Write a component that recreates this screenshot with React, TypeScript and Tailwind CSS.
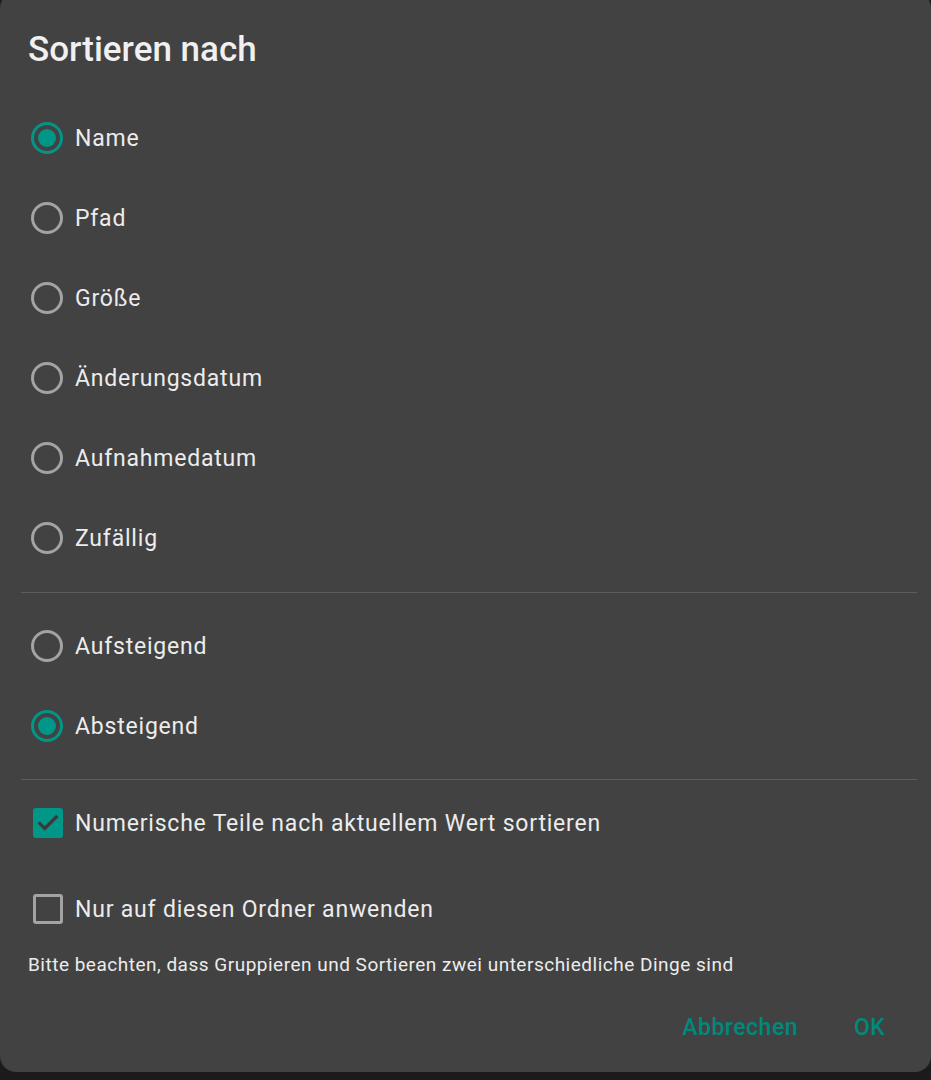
import React, { useState } from 'react';

const TEAL = 'bg-[#009688]';

const Radio = ({ checked }: { checked: boolean }) => (
  <span
    className={
      'flex items-center justify-center w-[32px] h-[32px] rounded-full border-[3px] ' +
      (checked ? 'border-[#009688]' : 'border-[#a3a3a3]')
    }
  >
    {checked && <span className={'w-[18px] h-[18px] rounded-full ' + TEAL} />}
  </span>
);

const Checkbox = ({ checked }: { checked: boolean }) =>
  checked ? (
    <span className="flex items-center justify-center w-[30px] h-[30px] rounded-[3px] bg-[#009688]">
      <svg viewBox="0 0 24 24" className="w-[28px] h-[28px]" fill="none" stroke="#3a3a3a" strokeWidth="2.8" strokeLinecap="square">
        <path d="M5 12.5l4.2 4.2L19 7" />
      </svg>
    </span>
  ) : (
    <span className="w-[30px] h-[30px] rounded-[3px] border-[3px] border-[#a3a3a3]" />
  );

const RadioRow = ({ label, checked, onClick }: { label: string; checked: boolean; onClick: () => void }) => (
  <div onClick={onClick} className="flex items-center h-[80px] pl-[31px] gap-[12px] cursor-pointer">
    <Radio checked={checked} />
    <span className="text-[23px] text-[#ececec] tracking-[0.8px] pt-[2px]">{label}</span>
  </div>
);

const CheckRow = ({ label, checked, onClick }: { label: string; checked: boolean; onClick: () => void }) => (
  <div onClick={onClick} className="flex items-center h-[86px] pl-[33px] gap-[12px] cursor-pointer">
    <Checkbox checked={checked} />
    <span className="text-[23px] text-[#ececec] tracking-[0.8px] pt-[2px]">{label}</span>
  </div>
);

export default function App() {
  const fields = ['Name', 'Pfad', 'Größe', 'Änderungsdatum', 'Aufnahmedatum', 'Zufällig'];
  const [field, setField] = useState('Name');
  const [order, setOrder] = useState('Absteigend');
  const [numeric, setNumeric] = useState(true);
  const [onlyFolder, setOnlyFolder] = useState(false);

  return (
    <div className="w-[931px] h-[1080px] overflow-hidden bg-[#1b1b1b]" style={{ fontFamily: 'Roboto, "Noto Sans", sans-serif' }}>
      <div className="-mt-[8px] h-[1080px] rounded-[16px] bg-[#424242] flex flex-col">
        <h1 className="pt-[38px] pl-[28px] text-[35px] leading-[40px] font-medium text-[#f0f0f0]">Sortieren nach</h1>

        <div className="mt-[28px]">
          {fields.map(f => (
            <RadioRow key={f} label={f} checked={field === f} onClick={() => setField(f)} />
          ))}
        </div>

        <div className="mt-[14px] mb-[13px] ml-[21px] mr-[14px] h-px bg-[#5c5c5c]" />

        <div>
          {['Aufsteigend', 'Absteigend'].map(o => (
            <RadioRow key={o} label={o} checked={order === o} onClick={() => setOrder(o)} />
          ))}
        </div>

        <div className="mt-[13px] ml-[21px] mr-[14px] h-px bg-[#5c5c5c]" />

        <CheckRow label="Numerische Teile nach aktuellem Wert sortieren" checked={numeric} onClick={() => setNumeric(!numeric)} />
        <CheckRow label="Nur auf diesen Ordner anwenden" checked={onlyFolder} onClick={() => setOnlyFolder(!onlyFolder)} />

        <p className="pl-[28px] text-[19px] leading-[26px] tracking-[0.5px] text-[#ececec]">
          Bitte beachten, dass Gruppieren und Sortieren zwei unterschiedliche Dinge sind
        </p>

        <div className="mt-[30px] flex justify-end items-center gap-[56px] pr-[46px]">
          <button className="text-[23px] font-medium tracking-[0.5px] text-[#00897b] leading-[40px]">Abbrechen</button>
          <button className="text-[23px] font-medium tracking-[0.3px] text-[#00897b] leading-[40px]">OK</button>
        </div>

        <div className="flex-1" />
      </div>
    </div>
  );
}
